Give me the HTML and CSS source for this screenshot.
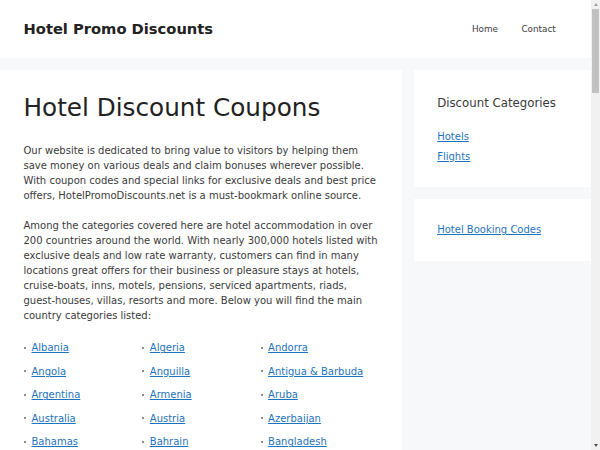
FILE: index.html
```html
<!DOCTYPE html>
<html lang="en">
<head>
<meta charset="utf-8">
<title>Hotel Discount Coupons – Hotel Promo Discounts</title>
<link rel="stylesheet" href="styles.css">
</head>
<body>
<div class="page">
<header class="site-header">
  <div class="site-title">Hotel Promo Discounts</div>
  <nav class="main-nav">
    <a class="nav-item" href="#">Home</a>
    <a class="nav-item" href="#">Contact</a>
  </nav>
</header>
<div class="site-content">
  <main class="site-main">
    <article class="article">
      <h1 class="entry-title">Hotel Discount Coupons</h1>
      <div class="entry-content">
        <p>Our website is dedicated to bring value to visitors by helping them save money on various deals and claim bonuses wherever possible. With coupon codes and special links for exclusive deals and best price offers, HotelPromoDiscounts.net is a must-bookmark online source.</p>
        <p>Among the categories covered here are hotel accommodation in over 200 countries around the world. With nearly 300,000 hotels listed with exclusive deals and low rate warranty, customers can find in many locations great offers for their business or pleasure stays at hotels, cruise-boats, inns, motels, pensions, serviced apartments, riads, guest-houses, villas, resorts and more. Below you will find the main country categories listed:</p>
        <ul class="countries">
          <li><a href="#">Albania</a></li><li><a href="#">Algeria</a></li><li><a href="#">Andorra</a></li>
          <li><a href="#">Angola</a></li><li><a href="#">Anguilla</a></li><li><a href="#">Antigua &amp; Barbuda</a></li>
          <li><a href="#">Argentina</a></li><li><a href="#">Armenia</a></li><li><a href="#">Aruba</a></li>
          <li><a href="#">Australia</a></li><li><a href="#">Austria</a></li><li><a href="#">Azerbaijan</a></li>
          <li><a href="#">Bahamas</a></li><li><a href="#">Bahrain</a></li><li><a href="#">Bangladesh</a></li>
          <li><a href="#">Barbados</a></li><li><a href="#">Belarus</a></li><li><a href="#">Belgium</a></li>
          <li><a href="#">Belize</a></li><li><a href="#">Benin</a></li><li><a href="#">Bermuda</a></li>
          <li><a href="#">Bhutan</a></li><li><a href="#">Bolivia</a></li><li><a href="#">Bosnia</a></li>
          <li><a href="#">Botswana</a></li><li><a href="#">Brazil</a></li><li><a href="#">Brunei</a></li>
          <li><a href="#">Bulgaria</a></li><li><a href="#">Burkina Faso</a></li><li><a href="#">Cambodia</a></li>
          <li><a href="#">Cameroon</a></li><li><a href="#">Canada</a></li><li><a href="#">Cape Verde</a></li>
          <li><a href="#">Cayman Islands</a></li><li><a href="#">Chile</a></li><li><a href="#">China</a></li>
          <li><a href="#">Colombia</a></li><li><a href="#">Costa Rica</a></li><li><a href="#">Croatia</a></li>
          <li><a href="#">Cuba</a></li><li><a href="#">Curaçao</a></li><li><a href="#">Cyprus</a></li>
          <li><a href="#">Czech Republic</a></li><li><a href="#">Denmark</a></li><li><a href="#">Dominica</a></li>
          <li><a href="#">Dominican Rep.</a></li><li><a href="#">Ecuador</a></li><li><a href="#">Egypt</a></li>
          <li><a href="#">El Salvador</a></li><li><a href="#">Estonia</a></li><li><a href="#">Ethiopia</a></li>
          <li><a href="#">Fiji</a></li><li><a href="#">Finland</a></li><li><a href="#">France</a></li>
          <li><a href="#">Gambia</a></li><li><a href="#">Georgia</a></li><li><a href="#">Germany</a></li>
          <li><a href="#">Ghana</a></li><li><a href="#">Greece</a></li><li><a href="#">Grenada</a></li>
          <li><a href="#">Guadeloupe</a></li><li><a href="#">Guatemala</a></li><li><a href="#">Honduras</a></li>
          <li><a href="#">Hong Kong</a></li><li><a href="#">Hungary</a></li><li><a href="#">Iceland</a></li>
          <li><a href="#">India</a></li><li><a href="#">Indonesia</a></li><li><a href="#">Ireland</a></li>
          <li><a href="#">Israel</a></li><li><a href="#">Italy</a></li><li><a href="#">Jamaica</a></li>
          <li><a href="#">Japan</a></li><li><a href="#">Jordan</a></li><li><a href="#">Kazakhstan</a></li>
          <li><a href="#">Kenya</a></li><li><a href="#">Kuwait</a></li><li><a href="#">Laos</a></li>
          <li><a href="#">Latvia</a></li><li><a href="#">Lebanon</a></li><li><a href="#">Lithuania</a></li>
          <li><a href="#">Luxembourg</a></li><li><a href="#">Macau</a></li><li><a href="#">Madagascar</a></li>
          <li><a href="#">Malaysia</a></li><li><a href="#">Maldives</a></li><li><a href="#">Malta</a></li>
          <li><a href="#">Martinique</a></li><li><a href="#">Mauritius</a></li><li><a href="#">Mexico</a></li>
          <li><a href="#">Moldova</a></li><li><a href="#">Monaco</a></li><li><a href="#">Mongolia</a></li>
          <li><a href="#">Montenegro</a></li><li><a href="#">Morocco</a></li><li><a href="#">Mozambique</a></li>
          <li><a href="#">Myanmar</a></li><li><a href="#">Namibia</a></li><li><a href="#">Nepal</a></li>
          <li><a href="#">Netherlands</a></li><li><a href="#">New Zealand</a></li><li><a href="#">Nicaragua</a></li>
          <li><a href="#">Nigeria</a></li><li><a href="#">Norway</a></li><li><a href="#">Oman</a></li>
          <li><a href="#">Pakistan</a></li><li><a href="#">Panama</a></li><li><a href="#">Paraguay</a></li>
          <li><a href="#">Peru</a></li><li><a href="#">Philippines</a></li><li><a href="#">Poland</a></li>
          <li><a href="#">Portugal</a></li><li><a href="#">Puerto Rico</a></li><li><a href="#">Qatar</a></li>
          <li><a href="#">Romania</a></li><li><a href="#">Russia</a></li><li><a href="#">Rwanda</a></li>
          <li><a href="#">Saudi Arabia</a></li><li><a href="#">Senegal</a></li><li><a href="#">Serbia</a></li>
          <li><a href="#">Seychelles</a></li><li><a href="#">Singapore</a></li><li><a href="#">Slovakia</a></li>
          <li><a href="#">Slovenia</a></li><li><a href="#">South Africa</a></li><li><a href="#">South Korea</a></li>
          <li><a href="#">Spain</a></li><li><a href="#">Sri Lanka</a></li><li><a href="#">Suriname</a></li>
          <li><a href="#">Sweden</a></li><li><a href="#">Switzerland</a></li><li><a href="#">Taiwan</a></li>
          <li><a href="#">Tanzania</a></li><li><a href="#">Thailand</a></li><li><a href="#">Tunisia</a></li>
          <li><a href="#">Turkey</a></li><li><a href="#">Uganda</a></li><li><a href="#">Ukraine</a></li>
          <li><a href="#">UAE</a></li><li><a href="#">United Kingdom</a></li><li><a href="#">United States</a></li>
          <li><a href="#">Uruguay</a></li><li><a href="#">Uzbekistan</a></li><li><a href="#">Vanuatu</a></li>
          <li><a href="#">Vietnam</a></li><li><a href="#">Zambia</a></li><li><a href="#">Zimbabwe</a></li>
        </ul>
        <p>Each country category contains the best hotel deals, coupon codes and promotions currently available, updated regularly so you can book your next stay at the lowest possible price.</p>
      </div>
    </article>
  </main>
  <aside class="sidebar">
    <section class="widget">
      <h2 class="widget-title">Discount Categories</h2>
      <ul class="widget-list">
        <li><a href="#">Hotels</a></li>
        <li><a href="#">Flights</a></li>
      </ul>
    </section>
    <section class="widget">
      <ul class="widget-list">
        <li><a href="#">Hotel Booking Codes</a></li>
      </ul>
    </section>
  </aside>
</div>
<footer class="site-footer">
  <div class="site-info">© 2024 Hotel Promo Discounts • Built with GeneratePress</div>
</footer>
</div>
<div class="scrollbar" aria-hidden="true">
  <span class="sb-arrow sb-up"></span>
  <span class="sb-thumb"></span>
  <span class="sb-track"></span>
  <span class="sb-arrow sb-down"></span>
</div>
</body>
</html>
```

FILE: styles.css
```css
html {
  background: #f7f8f9;
}
body {
  margin: 0;
  background: #f7f8f9;
  color: #3a3a3a;
  font-family: "DejaVu Sans", sans-serif;
  font-size: 10px;
  line-height: 1.5;
}
.page {
  margin-right: 9px;
}
a {
  color: #1e73be;
}
.site-header {
  background: #fff;
  height: 58px;
  display: flex;
  align-items: center;
  justify-content: space-between;
  padding: 0 23.5px;
}
.site-title {
  font-size: 14.7px;
  font-weight: bold;
  color: #222;
  line-height: 1.2;
}
.main-nav {
  display: flex;
}
.nav-item {
  font-size: 8.8px;
  line-height: 35px;
  padding: 0 11.8px;
  color: #3a3a3a;
  text-decoration: none;
}
.site-content {
  display: flex;
  align-items: flex-start;
  padding-top: 11.8px;
}
.site-main {
  width: 70%;
  padding-right: 11.8px;
  box-sizing: border-box;
}
.article {
  background: #fff;
  padding: 23.5px;
}
.entry-title {
  margin: 0 0 20px;
  font-size: 24.7px;
  font-weight: 400;
  line-height: 1.2;
  color: #222;
}
.entry-content p {
  margin: 0 0 15px;
}
.countries {
  list-style: none;
  margin: 0 0 15px;
  padding: 0;
  display: grid;
  grid-template-columns: repeat(3, 1fr);
}
.countries li {
  position: relative;
  padding: 2.5px 0 6px 8px;
  white-space: nowrap;
}
.countries li::before {
  content: "";
  position: absolute;
  left: 0.5px;
  top: 9px;
  width: 2px;
  height: 2px;
  border-radius: 50%;
  background: #666;
}
.sidebar {
  width: 30%;
  padding-bottom: 11.8px;
}
.widget {
  background: #fff;
  padding: 23.5px;
  margin-bottom: 11.8px;
}
.widget-title {
  margin: 0 0 15.6px;
  padding-top: 2px;
  font-size: 11.76px;
  font-weight: 400;
  line-height: 1.5;
  color: #3a3a3a;
}
.widget-list {
  list-style: none;
  margin: 0;
  padding: 0;
}
.widget-list li + li {
  margin-top: 5px;
}
.site-footer {
  background: #fff;
  margin-top: 11.8px;
  padding: 11.8px 23.5px;
  text-align: center;
  font-size: 8.8px;
}
.scrollbar {
  position: fixed;
  top: 0;
  right: 0;
  bottom: 0;
  width: 9px;
  background: #f1f1f1;
  display: flex;
  flex-direction: column;
  align-items: center;
}
.sb-arrow {
  flex: none;
  height: 9px;
  width: 9px;
  display: flex;
  align-items: center;
  justify-content: center;
}
.sb-arrow::before {
  content: "";
  width: 0;
  height: 0;
  border-left: 2.5px solid transparent;
  border-right: 2.5px solid transparent;
}
.sb-up::before {
  border-bottom: 3px solid #a3a3a3;
}
.sb-down::before {
  border-top: 3px solid #505050;
}
.sb-thumb {
  flex: none;
  width: 7px;
  height: 84px;
  background: #c1c1c1;
}
.sb-track {
  flex: 1;
}
```
